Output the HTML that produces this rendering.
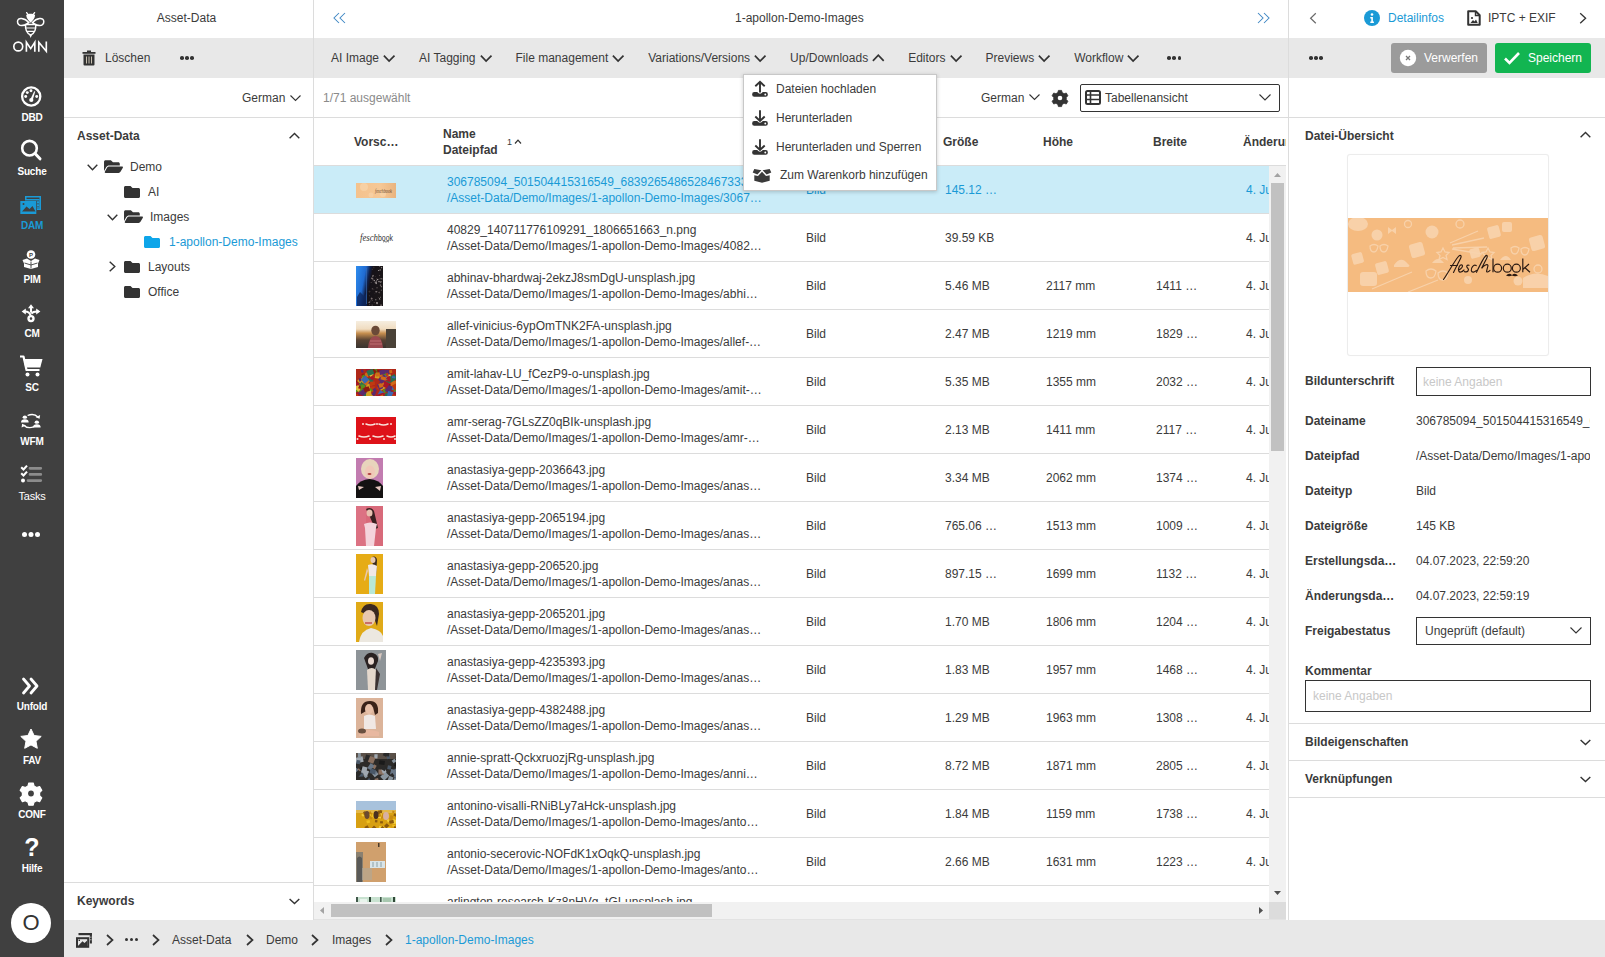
<!DOCTYPE html>
<html><head><meta charset="utf-8">
<style>
*{box-sizing:border-box;margin:0;padding:0}
html,body{width:1605px;height:957px;overflow:hidden;background:#fff}
body{position:relative;font-family:"Liberation Sans",sans-serif;font-size:12px;color:#3b3b3b}
.a{position:absolute}
.t{position:absolute;white-space:nowrap;line-height:16px;height:16px}
.b{font-weight:bold}
.nav{left:0;top:0;width:64px;height:957px;background:#404040}
.nl{position:absolute;left:0;width:64px;text-align:center;color:#fff;font-weight:bold;font-size:10px;line-height:12px;letter-spacing:-0.2px}
.gray{background:#e8e8e8}
.hl{position:absolute;height:1px;background:#dcdcdc}
.vl{position:absolute;width:1px;background:#dcdcdc}
svg{position:absolute;overflow:visible}
.blue{color:#1a9ad6}
.tb{display:flex;white-space:nowrap;line-height:16px}
.tb span{display:flex;align-items:center;margin-right:24px}
.chev{position:relative;margin-left:4px;top:0}
.cd,.cu{display:inline-block;width:12px;height:8px;margin-left:4px;position:relative}
.cd:before,.cu:before{content:"";position:absolute;left:2px;top:-2px;width:6px;height:6px;border-right:2px solid #333;border-bottom:2px solid #333;transform:rotate(45deg)}
.cu:before{top:3px;transform:rotate(-135deg)}
.dots3{display:flex;gap:1.5px;margin-left:0}
.dots3 b{display:block;width:3.6px;height:3.6px;border-radius:50%;background:#333}
</style></head><body>

<!-- NAV -->
<div class="a nav" id="nav">
<!-- bee -->
<svg style="left:0;top:0" width="64" height="60" viewBox="0 0 64 60">
 <g stroke="#fff" stroke-width="1.3" fill="none" stroke-linecap="round"><path d="M26.6 12.6 L28.4 15"/><path d="M34.6 12.6 L32.8 15"/></g>
 <path d="M26.2 15.2 C27.5 13.2 33.8 13.2 35.1 15.2 C35 18.5 32.3 21 30.65 22.8 C29 21 26.3 18.5 26.2 15.2Z" fill="#fff"/>
 <g fill="none" stroke="#fff" stroke-width="1.5">
  <path d="M28.8 22.6 C25 18 17.3 16.5 17.5 21.8 C17.8 27 24.5 26.5 28.8 22.6 Z"/>
  <path d="M32.5 22.6 C36.3 18 44 16.5 43.8 21.8 C43.5 27 36.8 26.5 32.5 22.6 Z"/>
 </g>
 <path d="M25.6 24.6 H35.7 C36.2 30 34 33.5 30.65 35.2 C27.3 33.5 25.1 30 25.6 24.6 Z" fill="#404040" stroke="#fff" stroke-width="1.5"/>
 <path d="M26 28 H35.3 M26.8 31.3 H34.5" stroke="#fff" stroke-width="1.2"/>
 <path d="M29.4 35 H31.9 L30.65 38 Z" fill="#fff"/>
 <g fill="none" stroke="#fff" stroke-width="1.65">
  <circle cx="18.25" cy="46.5" r="4.45"/>
  <path d="M26.4 51.7 V42.2 L30.7 48.6 L34.8 42.2 V51.7" stroke-linejoin="miter"/>
  <path d="M38.8 51.7 V42.2 L46.3 51.2 V41.5"/>
 </g>
</svg>
<!-- DBD gauge -->
<svg style="left:0;top:80px" width="64" height="34" viewBox="0 0 64 34">
 <circle cx="31.2" cy="16.5" r="9.1" fill="none" stroke="#fff" stroke-width="2.3"/>
 <circle cx="25.7" cy="16.5" r="1.45" fill="#fff"/><circle cx="27.3" cy="12.6" r="1.45" fill="#fff"/><circle cx="31" cy="10.8" r="1.45" fill="#fff"/><circle cx="36.7" cy="16.5" r="1.45" fill="#fff"/>
 <path d="M30.2 19.8 L34.2 11.2 L35.2 11.6 L32.6 20.6 Z" fill="#fff"/><circle cx="31.3" cy="20" r="2.1" fill="#fff"/>
</svg>
<div class="nl" style="top:112px">DBD</div>
<!-- Suche -->
<svg style="left:0;top:136px" width="64" height="30" viewBox="0 0 64 30">
 <circle cx="29.5" cy="12.2" r="7.3" fill="none" stroke="#fff" stroke-width="2.6"/>
 <path d="M35 17.5 L40 22.8" stroke="#fff" stroke-width="3" stroke-linecap="round"/>
</svg>
<div class="nl" style="top:166px">Suche</div>
<!-- DAM -->
<svg style="left:0;top:192px" width="64" height="26" viewBox="0 0 64 26">
 <path d="M25 4 h16 v14 h-16 z" fill="#1a9ad6"/>
 <path d="M26.5 5.5 h13 v11 h-13z" fill="#404040"/>
 <path d="M26 7 h13.5 v9.5 h-13.5z" fill="#1a9ad6"/>
 <path d="M38 8 v1.5 M38 11 v1.5 M38 14 v1.5" stroke="#404040" stroke-width="1"/>
 <path d="M20.5 8.5 h16.5 v13.5 h-16.5z" fill="#404040"/>
 <path d="M20.3 9 h16 v13 h-16z" fill="#1a9ad6"/>
 <path d="M22 19.5 l4.5-5 l3 2.5 l3-3 l3 5.5z" fill="#404040"/>
 <circle cx="23.5" cy="12" r="1" fill="#404040"/>
</svg>
<div class="nl blue" style="top:220px;color:#1a9ad6">DAM</div>
<!-- PIM -->
<svg style="left:0;top:246px" width="64" height="26" viewBox="0 0 64 26">
 <circle cx="31" cy="8.5" r="4.3" fill="#fff"/>
 <text x="31" y="10.8" text-anchor="middle" font-size="6" font-weight="bold" fill="#404040" font-family="Liberation Sans">P</text>
 <path d="M22.5 14 L27 12.5 L31 15 L35 12.5 L39.5 14 L38 17.5 L38 21 L31 23 L24 21 L24 17.5 Z" fill="#fff"/>
 <path d="M24.5 17 L31 19 L37.5 17 M31 15.5 v7" stroke="#404040" stroke-width="0.9" fill="none"/>
</svg>
<div class="nl" style="top:274px">PIM</div>
<!-- CM -->
<svg style="left:0;top:300px" width="64" height="26" viewBox="0 0 64 26">
 <path d="M31 4.3 L28 8.3 L34 8.3 Z" fill="#fff"/>
 <path d="M21.6 11.5 L25.8 8.4 L25.8 14.6 Z" fill="#fff"/>
 <path d="M40.4 11.5 L36.2 8.4 L36.2 14.6 Z" fill="#fff"/>
 <g stroke="#fff" stroke-width="2.1" fill="none">
  <path d="M31 7.5 V12.5"/>
  <path d="M25 11.5 Q29.5 11.5 30.6 15.5"/>
  <path d="M37 11.5 Q33 11.5 31.3 13.5"/>
 </g>
 <circle cx="31" cy="18.6" r="2.5" fill="none" stroke="#fff" stroke-width="2.4"/>
</svg>
<div class="nl" style="top:328px">CM</div>
<!-- SC cart -->
<svg style="left:0;top:352px" width="64" height="28" viewBox="0 0 64 28">
 <path d="M20 4.5 h3.5 l3 13.5 h13" fill="none" stroke="#fff" stroke-width="2.2" stroke-linejoin="round"/>
 <path d="M23.5 7 h19 l-2.2 8.5 h-15z" fill="#fff"/>
 <circle cx="27.5" cy="22.5" r="2" fill="#fff"/><circle cx="37.5" cy="22.5" r="2" fill="#fff"/>
</svg>
<div class="nl" style="top:382px">SC</div>
<!-- WFM -->
<svg style="left:0;top:410px" width="64" height="24" viewBox="0 0 64 24"><g transform="translate(-1.86,1.34) scale(1.09,0.83)">
 <circle cx="24.5" cy="7" r="2" fill="#fff"/>
 <path d="M21 13.5 q0-4 3.5-4 q3.5 0 3.5 4z" fill="#fff"/>
 <circle cx="35.5" cy="13" r="2" fill="#fff"/>
 <path d="M32 19.5 q0-4 3.5-4 q3.5 0 3.5 4z" fill="#fff"/>
 <path d="M27 5 q6-3 9.5 2" fill="none" stroke="#fff" stroke-width="1.6"/>
 <path d="M38.5 4.5 l-0.5 4.5 l-3.5-2z" fill="#fff"/>
 <path d="M33 18.5 q-6 3 -9.5 -2" fill="none" stroke="#fff" stroke-width="1.6"/>
 <path d="M21.5 19.5 l0.5-4.5 l3.5 2z" fill="#fff"/>
</g></svg>
<div class="nl" style="top:436px">WFM</div>
<!-- Tasks -->
<svg style="left:0;top:462px" width="64" height="26" viewBox="0 0 64 26">
 <path d="M21.2 5.3 L23.5 7.5 L27 3.6" fill="none" stroke="#fff" stroke-width="2.1"/>
 <path d="M21.2 11.3 L23.5 13.5 L27 9.6" fill="none" stroke="#fff" stroke-width="2.1"/>
 <circle cx="23" cy="18.6" r="2" fill="#fff"/>
 <path d="M30 6.3 h10.8 M30 12.4 h10.8 M28 18.6 h12.8" stroke="#8c8c8c" stroke-width="2.7" stroke-linecap="round"/>
</svg>
<div class="nl" style="top:490px;font-weight:normal;font-size:11px">Tasks</div>
<!-- dots -->
<svg style="left:0;top:528px" width="64" height="12" viewBox="0 0 64 12">
 <circle cx="24.5" cy="6.5" r="2.5" fill="#fff"/><circle cx="31" cy="6.5" r="2.5" fill="#fff"/><circle cx="37.5" cy="6.5" r="2.5" fill="#fff"/>
</svg>
<!-- Unfold -->
<svg style="left:0;top:674px" width="64" height="24" viewBox="0 0 64 24">
 <path d="M23.5 5 l6 7 l-6 7 M31 5 l6 7 l-6 7" fill="none" stroke="#fff" stroke-width="2.8" stroke-linecap="round" stroke-linejoin="round"/>
</svg>
<div class="nl" style="top:701px">Unfold</div>
<!-- FAV -->
<svg style="left:0;top:726px" width="64" height="26" viewBox="0 0 64 26">
 <path d="M31 3 l3.1 6.5 l7.1 0.9 l-5.2 4.9 l1.3 7 l-6.3 -3.4 l-6.3 3.4 l1.3 -7 l-5.2 -4.9 l7.1 -0.9z" fill="#fff" stroke="#fff" stroke-width="1" stroke-linejoin="round"/>
</svg>
<div class="nl" style="top:755px">FAV</div>
<!-- CONF -->
<svg style="left:0;top:780px" width="64" height="28" viewBox="0 0 64 28">
 <g transform="translate(31,13.5)">
  <path d="M-2.2 -10.5 h4.4 l0.8 3 l2.6 1.5 l3 -0.9 l2.2 3.8 l-2.2 2.2 v3 l2.2 2.2 l-2.2 3.8 l-3 -0.9 l-2.6 1.5 l-0.8 3 h-4.4 l-0.8 -3 l-2.6 -1.5 l-3 0.9 l-2.2 -3.8 l2.2 -2.2 v-3 l-2.2 -2.2 l2.2 -3.8 l3 0.9 l2.6 -1.5z" fill="#fff" stroke="#fff" stroke-width="1.2" stroke-linejoin="round"/>
  <circle r="2.9" fill="#404040"/>
 </g>
</svg>
<div class="nl" style="top:809px">CONF</div>
<!-- Hilfe -->
<div class="a" style="left:0;top:833px;width:64px;text-align:center;color:#fff;font-weight:bold;font-size:25px;line-height:28px">?</div>
<div class="nl" style="top:863px">Hilfe</div>
<!-- avatar -->
<div class="a" style="left:11px;top:903px;width:40px;height:40px;border-radius:50%;background:#fff;color:#333;font-size:22px;line-height:40px;text-align:center">O</div>
</div>


<!-- LEFT PANEL -->
<div class="t" style="left:62px;top:10px;width:249px;text-align:center">Asset-Data</div>
<div class="a gray" style="left:64px;top:38px;width:249px;height:40px"></div>
<svg style="left:82px;top:50px" width="14" height="16" viewBox="0 0 14 16"><path d="M0.5 2 h13 v1.8 h-13z" fill="#333"/><path d="M5 0.5 h4 v2 h-4z" fill="#333"/><path d="M1.5 4.5 h11 v10 q0 1 -1 1 h-9 q-1 0 -1-1z" fill="#333"/><path d="M4.5 6.5 v7 M7 6.5 v7 M9.5 6.5 v7" stroke="#c8c0b0" stroke-width="1"/></svg>
<div class="t" style="left:105px;top:50px">Löschen</div>
<div class="a dots3" style="left:180px;top:56px"><b></b><b></b><b></b></div>
<div class="t" style="left:242px;top:90px">German</div>
<svg style="left:290px;top:95px" width="11" height="7" viewBox="0 0 11 7"><path d="M0.5 0.5 L5.5 5.5 L10.5 0.5" fill="none" stroke="#333" stroke-width="1.1"/></svg>
<div class="hl" style="left:64px;top:117px;width:249px"></div>
<div class="t b" style="left:77px;top:128px">Asset-Data</div>
<svg style="left:288px;top:132px" width="12" height="8" viewBox="0 0 12 8"><path d="M1.6 6.3 L6.5 1.5 L11.3 6.3" fill="none" stroke="#333" stroke-width="1.4"/></svg>
<!-- tree -->
<svg style="left:87px;top:164px" width="11" height="7" viewBox="0 0 11 7"><path d="M0.7 0.7 L5.5 5.8 L10.3 0.7" fill="none" stroke="#333" stroke-width="1.4"/></svg>
<svg style="left:104px;top:160px" width="19" height="15" viewBox="0 0 576 456"><path class="fo" d="M572.694 292.093L500.27 416.248A63.997 63.997 0 0 1 444.989 448H45.025c-18.523 0-30.064-20.093-20.731-36.093l72.424-124.155A64 64 0 0 1 152 256h399.964c18.523 0 30.064 20.093 20.73 36.093zM152 224h328v-48c0-26.51-21.49-48-48-48H272l-64-64H48C21.49 64 0 85.49 0 112v278.046l69.077-118.418C86.214 242.25 117.989 224 152 224z" transform="translate(0,-56)" fill="#333"/></svg>
<div class="t" style="left:130px;top:159px">Demo</div>
<svg style="left:124px;top:185px" width="16" height="14" viewBox="0 64 512 384"><path d="M464 128H272l-64-64H48C21.49 64 0 85.49 0 112v288c0 26.51 21.49 48 48 48h416c26.51 0 48-21.49 48-48V176c0-26.51-21.49-48-48-48z" fill="#333"/></svg>
<div class="t" style="left:148px;top:184px">AI</div>
<svg style="left:107px;top:214px" width="11" height="7" viewBox="0 0 11 7"><path d="M0.7 0.7 L5.5 5.8 L10.3 0.7" fill="none" stroke="#333" stroke-width="1.4"/></svg>
<svg style="left:124px;top:210px" width="19" height="15" viewBox="0 0 576 456"><path d="M572.694 292.093L500.27 416.248A63.997 63.997 0 0 1 444.989 448H45.025c-18.523 0-30.064-20.093-20.731-36.093l72.424-124.155A64 64 0 0 1 152 256h399.964c18.523 0 30.064 20.093 20.73 36.093zM152 224h328v-48c0-26.51-21.49-48-48-48H272l-64-64H48C21.49 64 0 85.49 0 112v278.046l69.077-118.418C86.214 242.25 117.989 224 152 224z" transform="translate(0,-56)" fill="#333"/></svg>
<div class="t" style="left:150px;top:209px">Images</div>
<svg style="left:144px;top:235px" width="16" height="14" viewBox="0 64 512 384"><path d="M464 128H272l-64-64H48C21.49 64 0 85.49 0 112v288c0 26.51 21.49 48 48 48h416c26.51 0 48-21.49 48-48V176c0-26.51-21.49-48-48-48z" fill="#0ea5e9"/></svg>
<div class="t blue" style="left:169px;top:234px">1-apollon-Demo-Images</div>
<svg style="left:109px;top:261px" width="7" height="11" viewBox="0 0 7 11"><path d="M0.7 0.7 L5.8 5.5 L0.7 10.3" fill="none" stroke="#333" stroke-width="1.4"/></svg>
<svg style="left:124px;top:260px" width="16" height="14" viewBox="0 64 512 384"><path d="M464 128H272l-64-64H48C21.49 64 0 85.49 0 112v288c0 26.51 21.49 48 48 48h416c26.51 0 48-21.49 48-48V176c0-26.51-21.49-48-48-48z" fill="#333"/></svg>
<div class="t" style="left:148px;top:259px">Layouts</div>
<svg style="left:124px;top:285px" width="16" height="14" viewBox="0 64 512 384"><path d="M464 128H272l-64-64H48C21.49 64 0 85.49 0 112v288c0 26.51 21.49 48 48 48h416c26.51 0 48-21.49 48-48V176c0-26.51-21.49-48-48-48z" fill="#333"/></svg>
<div class="t" style="left:148px;top:284px">Office</div>
<div class="hl" style="left:64px;top:882px;width:249px"></div>
<div class="t b" style="left:77px;top:893px">Keywords</div>
<svg style="left:288px;top:898px" width="12" height="7" viewBox="0 0 12 7"><path d="M1.6 1 L6.5 5.6 L11.3 1" fill="none" stroke="#333" stroke-width="1.4"/></svg>
<div class="vl" style="left:313px;top:0;height:920px"></div>

<!-- BREADCRUMB -->
<div class="a gray" style="left:64px;top:920px;width:1541px;height:37px"></div>
<div class="hl" style="left:314px;top:919px;width:972px;background:#e2e2e2"></div>
<svg style="left:76px;top:932px" width="17" height="16" viewBox="0 0 17 16"><rect x="2.5" y="1" width="13.3" height="2.2" fill="#333"/><rect x="13.8" y="1" width="2.1" height="10.5" fill="#333"/><rect x="14.4" y="4.6" width="0.9" height="1.1" fill="#e8e8e8"/><rect x="14.4" y="7.2" width="0.9" height="1.1" fill="#e8e8e8"/><rect x="1" y="6.2" width="11.2" height="8.6" fill="#e8e8e8" stroke="#333" stroke-width="2"/><path d="M2 13.9 L6.5 9.3 L8.5 11 L11.2 8.6 V13.9z" fill="#333"/><rect x="2.6" y="7.6" width="1.4" height="1.4" fill="#333"/></svg>
<svg class="bc" style="left:106px;top:934px"width="8" height="12" viewBox="0 0 8 12"><path d="M1 1 L6.5 6 L1 11" fill="none" stroke="#333" stroke-width="1.7"/></svg>
<div class="a dots3" style="left:125px;top:938px;gap:2px"><b style="width:3px;height:3px"></b><b style="width:3px;height:3px"></b><b style="width:3px;height:3px"></b></div>
<svg style="left:152px;top:934px" width="8" height="12" viewBox="0 0 8 12"><path d="M1 1 L6.5 6 L1 11" fill="none" stroke="#333" stroke-width="1.7"/></svg>
<div class="t" style="left:172px;top:932px">Asset-Data</div>
<svg style="left:246px;top:934px" width="8" height="12" viewBox="0 0 8 12"><path d="M1 1 L6.5 6 L1 11" fill="none" stroke="#333" stroke-width="1.7"/></svg>
<div class="t" style="left:266px;top:932px">Demo</div>
<svg style="left:311px;top:934px" width="8" height="12" viewBox="0 0 8 12"><path d="M1 1 L6.5 6 L1 11" fill="none" stroke="#333" stroke-width="1.7"/></svg>
<div class="t" style="left:332px;top:932px">Images</div>
<svg style="left:385px;top:934px" width="8" height="12" viewBox="0 0 8 12"><path d="M1 1 L6.5 6 L1 11" fill="none" stroke="#333" stroke-width="1.7"/></svg>
<div class="t blue" style="left:405px;top:932px">1-apollon-Demo-Images</div>

<!-- CENTER -->
<svg style="left:333px;top:12px" width="14" height="12" viewBox="0 0 14 12"><path d="M6 1 L1 6 L6 11 M12 1 L7 6 L12 11" fill="none" stroke="#3f87c4" stroke-width="1.05"/></svg>
<div class="t" style="left:735px;top:10px">1-apollon-Demo-Images</div>
<svg style="left:1256px;top:12px" width="14" height="12" viewBox="0 0 14 12"><path d="M2 1 L7 6 L2 11 M8 1 L13 6 L8 11" fill="none" stroke="#3f87c4" stroke-width="1.05"/></svg>
<div class="a gray" style="left:314px;top:38px;width:974px;height:40px"></div>
<div class="a tb" style="left:331px;top:50px">
 <span>AI Image<svg class="chev" width="12" height="8" viewBox="0 0 12 8"><path d="M0.9 1.7 L6.1 7.1 L11.5 1.7" fill="none" stroke="#333" stroke-width="1.7"/></svg></span><span>AI Tagging<svg class="chev" width="12" height="8" viewBox="0 0 12 8"><path d="M0.9 1.7 L6.1 7.1 L11.5 1.7" fill="none" stroke="#333" stroke-width="1.7"/></svg></span><span>File management<svg class="chev" width="12" height="8" viewBox="0 0 12 8"><path d="M0.9 1.7 L6.1 7.1 L11.5 1.7" fill="none" stroke="#333" stroke-width="1.7"/></svg></span><span>Variations/Versions<svg class="chev" width="12" height="8" viewBox="0 0 12 8"><path d="M0.9 1.7 L6.1 7.1 L11.5 1.7" fill="none" stroke="#333" stroke-width="1.7"/></svg></span><span>Up/Downloads<svg class="chev" width="12" height="8" viewBox="0 0 12 8"><path d="M0.9 6.8 L6.3 1.2 L11.7 6.8" fill="none" stroke="#333" stroke-width="1.7"/></svg></span><span>Editors<svg class="chev" width="12" height="8" viewBox="0 0 12 8"><path d="M0.9 1.7 L6.1 7.1 L11.5 1.7" fill="none" stroke="#333" stroke-width="1.7"/></svg></span><span>Previews<svg class="chev" width="12" height="8" viewBox="0 0 12 8"><path d="M0.9 1.7 L6.1 7.1 L11.5 1.7" fill="none" stroke="#333" stroke-width="1.7"/></svg></span><span>Workflow<svg class="chev" width="12" height="8" viewBox="0 0 12 8"><path d="M0.9 1.7 L6.1 7.1 L11.5 1.7" fill="none" stroke="#333" stroke-width="1.7"/></svg></span><span class="dots3" style="margin-left:4px"><b></b><b></b><b></b></span>
</div>
<div class="t" style="left:323px;top:90px;color:#8a8a8a">1/71 ausgewählt</div>
<div class="t" style="left:981px;top:90px">German</div>
<svg style="left:1029px;top:94px" width="11" height="7" viewBox="0 0 11 7"><path d="M0.5 0.5 L5.5 5.5 L10.5 0.5" fill="none" stroke="#333" stroke-width="1.1"/></svg>
<svg style="left:1052px;top:90px" width="16" height="16" viewBox="-8 -8 16 16" id="gear1">
 <path d="M-1.6 -7.6 h3.2 l0.6 2.2 l1.9 1.1 l2.2 -0.7 l1.6 2.8 l-1.6 1.6 v2.2 l1.6 1.6 l-1.6 2.8 l-2.2 -0.7 l-1.9 1.1 l-0.6 2.2 h-3.2 l-0.6 -2.2 l-1.9 -1.1 l-2.2 0.7 l-1.6 -2.8 l1.6 -1.6 v-2.2 l-1.6 -1.6 l1.6 -2.8 l2.2 0.7 l1.9 -1.1z" fill="#333" stroke="#333" stroke-width="0.8" stroke-linejoin="round"/>
 <circle r="2.3" fill="#fff"/>
</svg>
<div class="a" style="left:1080px;top:84px;width:200px;height:28px;border:1px solid #333;border-radius:2px"></div>
<svg style="left:1085px;top:90px" width="16" height="15" viewBox="0 0 16 15"><rect x="1" y="1" width="14" height="13" rx="1.5" fill="none" stroke="#333" stroke-width="2"/><path d="M1 5 h14 M1 9.5 h14 M5.5 1 v13" stroke="#333" stroke-width="1.6"/></svg>
<div class="t" style="left:1105px;top:90px">Tabellenansicht</div>
<svg style="left:1259px;top:94px" width="12" height="7" viewBox="0 0 12 7"><path d="M0.5 0.5 L6 6 L11.5 0.5" fill="none" stroke="#333" stroke-width="1.1"/></svg>
<div class="hl" style="left:314px;top:117px;width:974px"></div>
<!-- table header -->
<div class="t b" style="left:354px;top:134px">Vorsc…</div>
<div class="t b" style="left:443px;top:126px">Name</div>
<div class="t b" style="left:443px;top:142px">Dateipfad</div>
<div class="t" style="left:507px;top:136px;font-size:9px;line-height:12px">1</div>
<svg style="left:514px;top:139px" width="8" height="5" viewBox="0 0 8 5"><path d="M1 4.5 L4 1.2 L7 4.5" fill="none" stroke="#333" stroke-width="1.2"/></svg>
<div class="t b" style="left:943px;top:134px">Größe</div>
<div class="t b" style="left:1043px;top:134px">Höhe</div>
<div class="t b" style="left:1153px;top:134px">Breite</div>
<div class="a" style="left:1243px;top:126px;width:43px;height:30px;overflow:hidden"><div class="t b" style="left:0;top:8px">Änderungsdatum</div></div>
<div class="hl" style="left:314px;top:165px;width:972px"></div>
<div class="a" style="left:314px;top:166px;width:955px;height:736px;overflow:hidden">
<div class="a row blue" style="left:0;top:0px;width:974px;height:48px;background:#caecf8;border-bottom:1px solid #dcdcdc">
<div class="a" style="left:42px;top:17px;width:40px;height:15px;background:linear-gradient(90deg,#f4c28d,#f6c896 60%,#e9b47f)"><svg style="left:0;top:0" width="40" height="15" viewBox="0 0 40 15"><circle cx="8" cy="4" r="4" fill="#f8d3a8" opacity=".8"/><circle cx="27" cy="11" r="3" fill="#f8d3a8" opacity=".8"/><circle cx="15" cy="12" r="2.5" fill="#f8d3a8" opacity=".7"/><text x="19" y="10" textLength="17" lengthAdjust="spacingAndGlyphs" font-family="Liberation Serif" font-style="italic" font-size="6" fill="#6a4a30">feschbook</text></svg></div>
<div class="t" style="left:133px;top:8px">306785094_501504415316549_6839265486528467333.jpg</div>
<div class="t" style="left:133px;top:24px">/Asset-Data/Demo/Images/1-apollon-Demo-Images/3067…</div>
<div class="t" style="left:492px;top:16px">Bild</div>
<div class="t" style="left:631px;top:16px">145.12 …</div>
<div class="t" style="left:732px;top:16px"></div>
<div class="t" style="left:842px;top:16px"></div>
<div class="t" style="left:932px;top:16px">4. Juli 2023</div>
</div>
<div class="a row" style="left:0;top:48px;width:974px;height:48px;background:#fff;border-bottom:1px solid #dcdcdc">
<div class="a" style="left:42px;top:16px;width:40px;height:14px"><svg style="left:0;top:0" width="40" height="14" viewBox="0 0 40 14"><text x="4" y="10.5" textLength="18" lengthAdjust="spacingAndGlyphs" font-family="Liberation Serif" font-style="italic" font-size="10" fill="#333">fesch</text><text x="22" y="10.5" textLength="15" lengthAdjust="spacingAndGlyphs" font-family="Liberation Sans" font-size="9" fill="#333">book</text><path d="M27 12 q1.5-1 3 0 q1.5-1 3 0" stroke="#555" stroke-width="0.8" fill="none"/></svg></div>
<div class="t" style="left:133px;top:8px">40829_140711776109291_1806651663_n.png</div>
<div class="t" style="left:133px;top:24px">/Asset-Data/Demo/Images/1-apollon-Demo-Images/4082…</div>
<div class="t" style="left:492px;top:16px">Bild</div>
<div class="t" style="left:631px;top:16px">39.59 KB</div>
<div class="t" style="left:732px;top:16px"></div>
<div class="t" style="left:842px;top:16px"></div>
<div class="t" style="left:932px;top:16px">4. Juli 2023</div>
</div>
<div class="a row" style="left:0;top:96px;width:974px;height:48px;background:#fff;border-bottom:1px solid #dcdcdc">
<div class="a" style="left:42px;top:4px;width:27px;height:40px"><svg style="left:0;top:0;overflow:hidden" width="27" height="40" viewBox="0 0 27 40"><defs><linearGradient id="ab1" x1="0" y1="0" x2="1" y2="0.3"><stop offset="0" stop-color="#2f8ef0"/><stop offset=".35" stop-color="#1f6ad0"/><stop offset=".5" stop-color="#10204a"/><stop offset=".6" stop-color="#151218"/><stop offset="1" stop-color="#1a1618"/></linearGradient></defs><rect width="27" height="40" fill="url(#ab1)"/><path d="M1 40 v-9 l3-5 l4 4 l3-3 v13z" fill="#0e2860" opacity=".8"/><rect x="10" y="2" width="1" height="36" fill="#3a70b8" opacity=".6"/><rect x="20.1" y="14.4" width="0.9" height="1.0" fill="#a8a0a0" transform="rotate(8 20.1 14.4)"/><rect x="24.8" y="18.3" width="1.2" height="1.3" fill="#7a7070" transform="rotate(60 24.8 18.3)"/><rect x="20.1" y="15.5" width="1.2" height="1.5" fill="#7a7070" transform="rotate(81 20.1 15.5)"/><rect x="25.0" y="15.2" width="0.8" height="0.5" fill="#5a5050" transform="rotate(20 25.0 15.2)"/><rect x="20.7" y="11.7" width="1.4" height="0.9" fill="#3a3232" transform="rotate(60 20.7 11.7)"/><rect x="25.0" y="15.1" width="1.2" height="1.5" fill="#908888" transform="rotate(50 25.0 15.1)"/><rect x="20.5" y="37.6" width="1.4" height="1.0" fill="#3a3232" transform="rotate(12 20.5 37.6)"/><rect x="19.4" y="10.1" width="0.7" height="0.8" fill="#3a3232" transform="rotate(53 19.4 10.1)"/><rect x="18.0" y="13.7" width="1.2" height="1.2" fill="#a8a0a0" transform="rotate(29 18.0 13.7)"/><rect x="21.9" y="36.2" width="1.5" height="1.9" fill="#a8a0a0" transform="rotate(85 21.9 36.2)"/><rect x="22.1" y="12.7" width="1.3" height="1.4" fill="#a8a0a0" transform="rotate(72 22.1 12.7)"/><rect x="21.5" y="24.7" width="0.8" height="1.1" fill="#3a3232" transform="rotate(36 21.5 24.7)"/><rect x="19.3" y="24.9" width="0.8" height="0.8" fill="#3a3232" transform="rotate(8 19.3 24.9)"/><rect x="15.0" y="11.5" width="1.1" height="1.3" fill="#5a5050" transform="rotate(5 15.0 11.5)"/><rect x="22.9" y="14.7" width="1.2" height="1.3" fill="#a8a0a0" transform="rotate(35 22.9 14.7)"/><rect x="26.0" y="12.1" width="1.2" height="0.8" fill="#a8a0a0" transform="rotate(68 26.0 12.1)"/><rect x="15.6" y="15.9" width="0.7" height="0.8" fill="#7a7070" transform="rotate(88 15.6 15.9)"/><rect x="24.3" y="12.2" width="0.7" height="1.0" fill="#908888" transform="rotate(48 24.3 12.2)"/><rect x="19.8" y="25.1" width="1.1" height="1.2" fill="#a8a0a0" transform="rotate(13 19.8 25.1)"/><rect x="25.2" y="19.8" width="1.3" height="1.2" fill="#7a7070" transform="rotate(38 25.2 19.8)"/><rect x="16.4" y="11.8" width="1.1" height="1.0" fill="#908888" transform="rotate(74 16.4 11.8)"/><rect x="17.9" y="23.0" width="1.0" height="0.7" fill="#3a3232" transform="rotate(59 17.9 23.0)"/><rect x="24.9" y="23.7" width="1.0" height="0.8" fill="#908888" transform="rotate(2 24.9 23.7)"/><rect x="25.4" y="0.8" width="1.2" height="1.1" fill="#908888" transform="rotate(38 25.4 0.8)"/><rect x="17.2" y="14.2" width="1.2" height="1.0" fill="#3a3232" transform="rotate(76 17.2 14.2)"/><rect x="23.2" y="4.1" width="0.9" height="1.2" fill="#a8a0a0" transform="rotate(87 23.2 4.1)"/><rect x="17.0" y="8.7" width="1.4" height="1.7" fill="#7a7070" transform="rotate(41 17.0 8.7)"/><rect x="18.7" y="27.2" width="0.9" height="0.6" fill="#3a3232" transform="rotate(42 18.7 27.2)"/><rect x="15.9" y="31.6" width="1.3" height="1.8" fill="#5a5050" transform="rotate(43 15.9 31.6)"/><rect x="15.8" y="22.2" width="1.4" height="1.1" fill="#5a5050" transform="rotate(4 15.8 22.2)"/><rect x="15.5" y="31.5" width="1.2" height="1.5" fill="#7a7070" transform="rotate(35 15.5 31.5)"/><rect x="23.8" y="3.3" width="1.0" height="1.1" fill="#a8a0a0" transform="rotate(16 23.8 3.3)"/><rect x="19.7" y="33.1" width="1.1" height="1.0" fill="#908888" transform="rotate(37 19.7 33.1)"/><rect x="18.3" y="35.9" width="1.1" height="0.8" fill="#5a5050" transform="rotate(61 18.3 35.9)"/><rect x="24.4" y="38.5" width="1.5" height="1.5" fill="#7a7070" transform="rotate(4 24.4 38.5)"/><rect x="23.9" y="25.9" width="1.4" height="1.4" fill="#3a3232" transform="rotate(69 23.9 25.9)"/><rect x="16.0" y="2.7" width="1.0" height="1.1" fill="#3a3232" transform="rotate(15 16.0 2.7)"/><rect x="13.6" y="35.2" width="1.4" height="1.7" fill="#7a7070" transform="rotate(55 13.6 35.2)"/><rect x="13.2" y="29.1" width="1.2" height="0.9" fill="#3a3232" transform="rotate(30 13.2 29.1)"/><rect x="19.8" y="16.1" width="1.3" height="1.8" fill="#a8a0a0" transform="rotate(14 19.8 16.1)"/><rect x="16.3" y="33.6" width="1.0" height="1.0" fill="#5a5050" transform="rotate(45 16.3 33.6)"/><rect x="14.6" y="34.6" width="0.9" height="0.6" fill="#7a7070" transform="rotate(35 14.6 34.6)"/><rect x="23.5" y="32.1" width="1.5" height="0.9" fill="#a8a0a0" transform="rotate(51 23.5 32.1)"/><rect x="16.5" y="10.5" width="0.7" height="0.8" fill="#908888" transform="rotate(6 16.5 10.5)"/><rect x="23.1" y="0.1" width="1.1" height="0.7" fill="#7a7070" transform="rotate(5 23.1 0.1)"/><rect x="13.9" y="38.0" width="0.8" height="1.0" fill="#5a5050" transform="rotate(65 13.9 38.0)"/><rect x="17.1" y="12.3" width="1.2" height="1.0" fill="#908888" transform="rotate(75 17.1 12.3)"/><rect x="16.4" y="38.5" width="1.0" height="0.9" fill="#7a7070" transform="rotate(71 16.4 38.5)"/><rect x="22.4" y="31.0" width="0.7" height="0.7" fill="#5a5050" transform="rotate(47 22.4 31.0)"/><rect x="21.5" y="21.1" width="1.1" height="1.2" fill="#5a5050" transform="rotate(79 21.5 21.1)"/><rect x="13.7" y="24.5" width="1.5" height="1.8" fill="#3a3232" transform="rotate(53 13.7 24.5)"/><rect x="18.4" y="0.7" width="1.6" height="1.2" fill="#3a3232" transform="rotate(88 18.4 0.7)"/><rect x="23.4" y="8.8" width="1.2" height="0.9" fill="#5a5050" transform="rotate(41 23.4 8.8)"/><rect x="24.7" y="30.8" width="1.0" height="0.8" fill="#908888" transform="rotate(88 24.7 30.8)"/><rect x="23.6" y="25.8" width="0.8" height="1.1" fill="#908888" transform="rotate(85 23.6 25.8)"/></svg></div>
<div class="t" style="left:133px;top:8px">abhinav-bhardwaj-2ekzJ8smDgU-unsplash.jpg</div>
<div class="t" style="left:133px;top:24px">/Asset-Data/Demo/Images/1-apollon-Demo-Images/abhi…</div>
<div class="t" style="left:492px;top:16px">Bild</div>
<div class="t" style="left:631px;top:16px">5.46 MB</div>
<div class="t" style="left:732px;top:16px">2117 mm</div>
<div class="t" style="left:842px;top:16px">1411 …</div>
<div class="t" style="left:932px;top:16px">4. Juli 2023</div>
</div>
<div class="a row" style="left:0;top:144px;width:974px;height:48px;background:#fff;border-bottom:1px solid #dcdcdc">
<div class="a" style="left:42px;top:11px;width:40px;height:27px"><svg style="left:0;top:0;overflow:hidden" width="40" height="27" viewBox="0 0 40 27"><defs><linearGradient id="al1" x1="0" y1="0" x2="0" y2="1"><stop offset="0" stop-color="#f6eee0"/><stop offset=".3" stop-color="#f0dcc0"/><stop offset=".45" stop-color="#c89050"/><stop offset=".7" stop-color="#5a4434"/><stop offset="1" stop-color="#3a3430"/></linearGradient></defs><rect width="40" height="27" fill="url(#al1)"/><rect x="30" y="8" width="10" height="19" fill="#4a4238"/><ellipse cx="19.5" cy="9.5" rx="4.2" ry="4.8" fill="#6a4a38"/><path d="M12 27 q1-12 7.5-12 q6.5 0 7.5 12z" fill="#9a4a50"/><path d="M14 20 h11 M14 23 h12" stroke="#c87878" stroke-width=".8"/></svg></div>
<div class="t" style="left:133px;top:8px">allef-vinicius-6ypOmTNK2FA-unsplash.jpg</div>
<div class="t" style="left:133px;top:24px">/Asset-Data/Demo/Images/1-apollon-Demo-Images/allef-…</div>
<div class="t" style="left:492px;top:16px">Bild</div>
<div class="t" style="left:631px;top:16px">2.47 MB</div>
<div class="t" style="left:732px;top:16px">1219 mm</div>
<div class="t" style="left:842px;top:16px">1829 …</div>
<div class="t" style="left:932px;top:16px">4. Juli 2023</div>
</div>
<div class="a row" style="left:0;top:192px;width:974px;height:48px;background:#fff;border-bottom:1px solid #dcdcdc">
<div class="a" style="left:42px;top:11px;width:40px;height:27px"><svg style="left:0;top:0;overflow:hidden" width="40" height="27" viewBox="0 0 40 27"><rect width="40" height="27" fill="#b02818"/><rect x="5.2" y="17.2" width="4.0" height="2.6" fill="#d06a18" transform="rotate(12 5.2 17.2)"/><rect x="1.4" y="13.2" width="4.1" height="2.6" fill="#2a7050" transform="rotate(53 1.4 13.2)"/><rect x="2.7" y="10.9" width="3.2" height="4.0" fill="#c03a10" transform="rotate(28 2.7 10.9)"/><rect x="22.9" y="0.7" width="4.9" height="5.2" fill="#d0a020" transform="rotate(28 22.9 0.7)"/><rect x="34.2" y="7.1" width="3.1" height="2.2" fill="#c03a10" transform="rotate(73 34.2 7.1)"/><rect x="32.5" y="4.1" width="3.9" height="4.2" fill="#3a68b0" transform="rotate(47 32.5 4.1)"/><rect x="28.2" y="14.8" width="3.3" height="3.6" fill="#5a2a70" transform="rotate(87 28.2 14.8)"/><rect x="30.9" y="12.0" width="4.6" height="6.2" fill="#e0c040" transform="rotate(38 30.9 12.0)"/><rect x="6.4" y="20.8" width="3.7" height="2.5" fill="#a81828" transform="rotate(67 6.4 20.8)"/><rect x="13.1" y="11.6" width="4.5" height="4.9" fill="#c03a10" transform="rotate(15 13.1 11.6)"/><rect x="5.8" y="8.6" width="4.5" height="6.1" fill="#2a7050" transform="rotate(5 5.8 8.6)"/><rect x="2.2" y="14.6" width="5.9" height="7.2" fill="#e0c040" transform="rotate(43 2.2 14.6)"/><rect x="23.4" y="15.2" width="5.1" height="4.9" fill="#c03a10" transform="rotate(34 23.4 15.2)"/><rect x="26.2" y="0.7" width="4.4" height="5.1" fill="#8a1a10" transform="rotate(87 26.2 0.7)"/><rect x="10.7" y="9.8" width="5.5" height="6.2" fill="#d0a020" transform="rotate(59 10.7 9.8)"/><rect x="24.0" y="12.8" width="4.1" height="3.1" fill="#a81828" transform="rotate(16 24.0 12.8)"/><rect x="15.3" y="24.7" width="5.2" height="5.2" fill="#58901a" transform="rotate(57 15.3 24.7)"/><rect x="10.4" y="2.8" width="4.2" height="4.0" fill="#d06a18" transform="rotate(35 10.4 2.8)"/><rect x="39.4" y="18.1" width="5.1" height="4.6" fill="#3a68b0" transform="rotate(19 39.4 18.1)"/><rect x="5.2" y="17.4" width="3.2" height="2.0" fill="#8a1a10" transform="rotate(23 5.2 17.4)"/><rect x="-0.8" y="10.7" width="3.8" height="3.4" fill="#8a1a10" transform="rotate(40 -0.8 10.7)"/><rect x="27.3" y="13.4" width="5.9" height="6.4" fill="#d0a020" transform="rotate(58 27.3 13.4)"/><rect x="31.0" y="23.5" width="5.7" height="7.1" fill="#2a7050" transform="rotate(50 31.0 23.5)"/><rect x="3.2" y="16.8" width="4.2" height="2.7" fill="#c03a10" transform="rotate(26 3.2 16.8)"/><rect x="3.5" y="15.8" width="4.3" height="2.9" fill="#8a1a10" transform="rotate(19 3.5 15.8)"/><rect x="37.9" y="16.2" width="4.6" height="3.0" fill="#3a68b0" transform="rotate(78 37.9 16.2)"/><rect x="25.0" y="25.8" width="4.1" height="4.5" fill="#5a2a70" transform="rotate(15 25.0 25.8)"/><rect x="19.0" y="26.4" width="3.3" height="3.3" fill="#a81828" transform="rotate(10 19.0 26.4)"/><rect x="29.7" y="19.7" width="3.4" height="3.4" fill="#58901a" transform="rotate(66 29.7 19.7)"/><rect x="38.0" y="13.8" width="3.1" height="2.2" fill="#d06a18" transform="rotate(3 38.0 13.8)"/><rect x="11.2" y="17.0" width="5.3" height="3.5" fill="#a81828" transform="rotate(66 11.2 17.0)"/><rect x="5.8" y="20.6" width="4.1" height="4.2" fill="#d06a18" transform="rotate(42 5.8 20.6)"/><rect x="24.1" y="21.1" width="4.9" height="5.9" fill="#3a68b0" transform="rotate(30 24.1 21.1)"/><rect x="29.3" y="5.3" width="5.5" height="5.5" fill="#e0c040" transform="rotate(3 29.3 5.3)"/><rect x="31.4" y="12.2" width="6.0" height="4.5" fill="#8a1a10" transform="rotate(44 31.4 12.2)"/><rect x="37.4" y="26.7" width="4.3" height="5.9" fill="#e0c040" transform="rotate(10 37.4 26.7)"/><rect x="8.3" y="4.5" width="3.7" height="2.8" fill="#8a1a10" transform="rotate(78 8.3 4.5)"/><rect x="18.7" y="17.3" width="5.5" height="6.8" fill="#c03a10" transform="rotate(84 18.7 17.3)"/><rect x="14.9" y="18.9" width="3.4" height="2.6" fill="#58901a" transform="rotate(55 14.9 18.9)"/><rect x="12.6" y="21.4" width="5.4" height="7.4" fill="#2a7050" transform="rotate(59 12.6 21.4)"/><rect x="37.8" y="19.3" width="4.2" height="3.1" fill="#58901a" transform="rotate(3 37.8 19.3)"/><rect x="36.1" y="21.6" width="3.5" height="2.5" fill="#8a1a10" transform="rotate(60 36.1 21.6)"/><rect x="13.4" y="14.4" width="5.0" height="3.5" fill="#d0a020" transform="rotate(83 13.4 14.4)"/><rect x="29.7" y="2.9" width="3.3" height="4.6" fill="#3a68b0" transform="rotate(27 29.7 2.9)"/><rect x="7.7" y="13.0" width="3.1" height="3.7" fill="#e0c040" transform="rotate(33 7.7 13.0)"/><rect x="33.2" y="0.7" width="4.6" height="5.5" fill="#5a2a70" transform="rotate(84 33.2 0.7)"/><rect x="36.1" y="10.8" width="4.8" height="6.3" fill="#d06a18" transform="rotate(16 36.1 10.8)"/><rect x="20.5" y="-0.5" width="4.6" height="4.4" fill="#58901a" transform="rotate(77 20.5 -0.5)"/><rect x="31.8" y="3.8" width="3.0" height="2.9" fill="#c03a10" transform="rotate(71 31.8 3.8)"/><rect x="27.0" y="13.9" width="3.2" height="3.1" fill="#c03a10" transform="rotate(71 27.0 13.9)"/><rect x="6.8" y="0.2" width="3.2" height="2.2" fill="#5a2a70" transform="rotate(71 6.8 0.2)"/><rect x="35.7" y="0.8" width="3.1" height="2.7" fill="#d06a18" transform="rotate(77 35.7 0.8)"/><rect x="27.4" y="11.7" width="4.5" height="4.7" fill="#5a2a70" transform="rotate(64 27.4 11.7)"/><rect x="27.7" y="23.5" width="5.8" height="7.9" fill="#a81828" transform="rotate(71 27.7 23.5)"/><rect x="7.3" y="11.5" width="5.7" height="5.3" fill="#2a7050" transform="rotate(56 7.3 11.5)"/><rect x="26.5" y="11.0" width="3.9" height="3.0" fill="#a81828" transform="rotate(15 26.5 11.0)"/><rect x="5.3" y="19.1" width="5.7" height="6.4" fill="#58901a" transform="rotate(32 5.3 19.1)"/><rect x="38.7" y="5.1" width="5.6" height="7.7" fill="#2a7050" transform="rotate(62 38.7 5.1)"/><rect x="26.4" y="5.3" width="3.5" height="4.1" fill="#d06a18" transform="rotate(51 26.4 5.3)"/><rect x="7.0" y="7.9" width="4.0" height="4.7" fill="#d0a020" transform="rotate(43 7.0 7.9)"/><rect x="17.1" y="-0.5" width="4.7" height="4.0" fill="#8a1a10" transform="rotate(37 17.1 -0.5)"/><rect x="1.6" y="26.6" width="4.5" height="5.6" fill="#c03a10" transform="rotate(10 1.6 26.6)"/><rect x="0.6" y="20.8" width="3.8" height="3.1" fill="#58901a" transform="rotate(54 0.6 20.8)"/><rect x="26.7" y="25.5" width="5.5" height="5.1" fill="#d06a18" transform="rotate(65 26.7 25.5)"/><rect x="27.7" y="1.5" width="4.7" height="3.0" fill="#58901a" transform="rotate(54 27.7 1.5)"/><rect x="10.0" y="-0.5" width="5.7" height="3.8" fill="#a81828" transform="rotate(10 10.0 -0.5)"/><rect x="8.1" y="6.4" width="4.8" height="3.4" fill="#d0a020" transform="rotate(43 8.1 6.4)"/><rect x="16.1" y="24.6" width="6.0" height="6.6" fill="#d0a020" transform="rotate(67 16.1 24.6)"/><rect x="37.5" y="26.1" width="5.1" height="4.2" fill="#58901a" transform="rotate(25 37.5 26.1)"/><rect x="24.8" y="13.9" width="5.8" height="4.4" fill="#5a2a70" transform="rotate(64 24.8 13.9)"/><rect x="10.1" y="21.5" width="5.0" height="7.0" fill="#d0a020" transform="rotate(1 10.1 21.5)"/><rect x="19.7" y="26.4" width="3.1" height="3.1" fill="#3a68b0" transform="rotate(57 19.7 26.4)"/><rect x="32.6" y="11.1" width="3.3" height="3.3" fill="#2a7050" transform="rotate(64 32.6 11.1)"/><rect x="7.8" y="5.4" width="3.9" height="3.0" fill="#58901a" transform="rotate(51 7.8 5.4)"/><rect x="39.3" y="22.4" width="6.0" height="3.6" fill="#a81828" transform="rotate(55 39.3 22.4)"/><rect x="2.5" y="22.6" width="3.5" height="4.5" fill="#a81828" transform="rotate(76 2.5 22.6)"/><rect x="11.0" y="11.9" width="3.7" height="2.7" fill="#5a2a70" transform="rotate(0 11.0 11.9)"/><rect x="38.4" y="26.2" width="3.8" height="3.9" fill="#3a68b0" transform="rotate(4 38.4 26.2)"/><rect x="11.7" y="9.0" width="5.9" height="3.5" fill="#2a7050" transform="rotate(10 11.7 9.0)"/><rect x="19.6" y="4.6" width="4.4" height="4.4" fill="#d0a020" transform="rotate(11 19.6 4.6)"/><rect x="2.7" y="10.2" width="3.8" height="2.4" fill="#d0a020" transform="rotate(38 2.7 10.2)"/><rect x="8.5" y="15.4" width="3.9" height="4.0" fill="#58901a" transform="rotate(84 8.5 15.4)"/><rect x="31.1" y="15.7" width="5.7" height="6.9" fill="#5a2a70" transform="rotate(19 31.1 15.7)"/><rect x="24.4" y="3.1" width="3.9" height="4.9" fill="#d06a18" transform="rotate(80 24.4 3.1)"/><rect x="27.7" y="13.2" width="4.3" height="5.7" fill="#d06a18" transform="rotate(72 27.7 13.2)"/><rect x="32.0" y="22.1" width="5.5" height="5.9" fill="#3a68b0" transform="rotate(10 32.0 22.1)"/><rect x="4.5" y="9.1" width="3.1" height="2.1" fill="#5a2a70" transform="rotate(71 4.5 9.1)"/><rect x="-0.2" y="13.9" width="3.2" height="2.5" fill="#a81828" transform="rotate(0 -0.2 13.9)"/><rect x="1.9" y="25.1" width="4.4" height="5.8" fill="#c03a10" transform="rotate(84 1.9 25.1)"/><rect x="29.6" y="12.3" width="4.6" height="5.7" fill="#a81828" transform="rotate(30 29.6 12.3)"/><rect x="7.4" y="19.7" width="5.2" height="7.2" fill="#5a2a70" transform="rotate(48 7.4 19.7)"/><rect x="36.3" y="7.0" width="3.2" height="2.1" fill="#3a68b0" transform="rotate(9 36.3 7.0)"/><rect x="12.6" y="17.2" width="4.8" height="5.5" fill="#8a1a10" transform="rotate(72 12.6 17.2)"/><rect x="18.8" y="12.6" width="3.4" height="4.7" fill="#c03a10" transform="rotate(88 18.8 12.6)"/><rect x="19.1" y="18.8" width="3.7" height="3.0" fill="#5a2a70" transform="rotate(59 19.1 18.8)"/><rect x="39.7" y="14.4" width="5.3" height="4.5" fill="#c03a10" transform="rotate(60 39.7 14.4)"/><rect x="17.8" y="22.0" width="3.1" height="4.2" fill="#5a2a70" transform="rotate(34 17.8 22.0)"/><rect x="36.6" y="25.1" width="4.2" height="2.7" fill="#c03a10" transform="rotate(18 36.6 25.1)"/><rect x="9.7" y="9.1" width="5.2" height="5.7" fill="#d06a18" transform="rotate(35 9.7 9.1)"/><rect x="27.8" y="5.5" width="5.7" height="7.5" fill="#5a2a70" transform="rotate(50 27.8 5.5)"/><rect x="-0.9" y="12.8" width="3.1" height="3.0" fill="#a81828" transform="rotate(18 -0.9 12.8)"/><rect x="14.4" y="2.4" width="4.2" height="3.7" fill="#e0c040" transform="rotate(43 14.4 2.4)"/><rect x="3.9" y="24.9" width="5.5" height="6.5" fill="#a81828" transform="rotate(32 3.9 24.9)"/><rect x="15.1" y="27.0" width="4.1" height="4.4" fill="#e0c040" transform="rotate(54 15.1 27.0)"/><rect x="34.0" y="6.9" width="5.3" height="3.4" fill="#a81828" transform="rotate(81 34.0 6.9)"/><rect x="9.2" y="6.4" width="5.8" height="5.9" fill="#3a68b0" transform="rotate(47 9.2 6.4)"/><rect x="16.5" y="-0.2" width="5.4" height="6.5" fill="#2a7050" transform="rotate(70 16.5 -0.2)"/><rect x="28.5" y="0.4" width="4.6" height="5.5" fill="#5a2a70" transform="rotate(78 28.5 0.4)"/><rect x="25.4" y="7.0" width="5.3" height="3.4" fill="#d06a18" transform="rotate(16 25.4 7.0)"/><rect x="16.0" y="6.9" width="3.5" height="2.8" fill="#a81828" transform="rotate(51 16.0 6.9)"/></svg></div>
<div class="t" style="left:133px;top:8px">amit-lahav-LU_fCezP9-o-unsplash.jpg</div>
<div class="t" style="left:133px;top:24px">/Asset-Data/Demo/Images/1-apollon-Demo-Images/amit-…</div>
<div class="t" style="left:492px;top:16px">Bild</div>
<div class="t" style="left:631px;top:16px">5.35 MB</div>
<div class="t" style="left:732px;top:16px">1355 mm</div>
<div class="t" style="left:842px;top:16px">2032 …</div>
<div class="t" style="left:932px;top:16px">4. Juli 2023</div>
</div>
<div class="a row" style="left:0;top:240px;width:974px;height:48px;background:#fff;border-bottom:1px solid #dcdcdc">
<div class="a" style="left:42px;top:11px;width:40px;height:27px"><svg style="left:0;top:0;overflow:hidden" width="40" height="27" viewBox="0 0 40 27"><rect width="40" height="27" fill="#d80c14"/><path d="M0 0 h40 v27 h-40z" fill="#e81c20" opacity=".4"/><g fill="none" stroke="#f8e0d8" stroke-width="1.6" stroke-linecap="round"><path d="M10 7 q4.5 2 9 0 M23 7 q4.5 2 9 0 M3 19 q5 2 10 0 M17 19 q5 2 10 0 M31 19 q4 2 8 0"/></g><g fill="#f8e0d8"><circle cx="7" cy="7" r="1"/><circle cx="21" cy="7" r="1"/><circle cx="35" cy="7" r="1"/><circle cx="1.5" cy="22" r="1"/><circle cx="14" cy="22" r="1"/><circle cx="28" cy="22" r="1"/><circle cx="39" cy="22" r="1"/></g></svg></div>
<div class="t" style="left:133px;top:8px">amr-serag-7GLsZZ0qBIk-unsplash.jpg</div>
<div class="t" style="left:133px;top:24px">/Asset-Data/Demo/Images/1-apollon-Demo-Images/amr-…</div>
<div class="t" style="left:492px;top:16px">Bild</div>
<div class="t" style="left:631px;top:16px">2.13 MB</div>
<div class="t" style="left:732px;top:16px">1411 mm</div>
<div class="t" style="left:842px;top:16px">2117 …</div>
<div class="t" style="left:932px;top:16px">4. Juli 2023</div>
</div>
<div class="a row" style="left:0;top:288px;width:974px;height:48px;background:#fff;border-bottom:1px solid #dcdcdc">
<div class="a" style="left:42px;top:4px;width:27px;height:40px"><svg style="left:0;top:0;overflow:hidden" width="27" height="40" viewBox="0 0 27 40"><rect width="27" height="40" fill="#c27cb0"/><ellipse cx="14" cy="11" rx="9" ry="10" fill="#e8d4bc"/><ellipse cx="14" cy="14" rx="5" ry="6.5" fill="#f0c8b8"/><ellipse cx="13.5" cy="16" rx="2" ry="1" fill="#b04040"/><path d="M0 40 v-12 q4-6 13.5-7 q9.5 1 13.5 7 v12z" fill="#141212"/><path d="M2 28 l6 1 l-5 3z M25 28 l-6 1 l5 4z" fill="#e8c8c0"/></svg></div>
<div class="t" style="left:133px;top:8px">anastasiya-gepp-2036643.jpg</div>
<div class="t" style="left:133px;top:24px">/Asset-Data/Demo/Images/1-apollon-Demo-Images/anas…</div>
<div class="t" style="left:492px;top:16px">Bild</div>
<div class="t" style="left:631px;top:16px">3.34 MB</div>
<div class="t" style="left:732px;top:16px">2062 mm</div>
<div class="t" style="left:842px;top:16px">1374 …</div>
<div class="t" style="left:932px;top:16px">4. Juli 2023</div>
</div>
<div class="a row" style="left:0;top:336px;width:974px;height:48px;background:#fff;border-bottom:1px solid #dcdcdc">
<div class="a" style="left:42px;top:4px;width:27px;height:40px"><svg style="left:0;top:0;overflow:hidden" width="27" height="40" viewBox="0 0 27 40"><rect width="27" height="40" fill="#d86a7a"/><rect x="0" width="10" height="40" fill="#e07888" opacity=".6"/><path d="M10 3 q5-3 8 2 l4 17 l-3 1 l-5-12z" fill="#3a2020"/><ellipse cx="13.5" cy="7" rx="3" ry="3.6" fill="#e8c0b0"/><path d="M8 18 q6-3 13 0 l-1 4 l-2 18 h-8 l-1-18z" fill="#f4d4dc"/></svg></div>
<div class="t" style="left:133px;top:8px">anastasiya-gepp-2065194.jpg</div>
<div class="t" style="left:133px;top:24px">/Asset-Data/Demo/Images/1-apollon-Demo-Images/anas…</div>
<div class="t" style="left:492px;top:16px">Bild</div>
<div class="t" style="left:631px;top:16px">765.06 …</div>
<div class="t" style="left:732px;top:16px">1513 mm</div>
<div class="t" style="left:842px;top:16px">1009 …</div>
<div class="t" style="left:932px;top:16px">4. Juli 2023</div>
</div>
<div class="a row" style="left:0;top:384px;width:974px;height:48px;background:#fff;border-bottom:1px solid #dcdcdc">
<div class="a" style="left:42px;top:4px;width:27px;height:40px"><svg style="left:0;top:0;overflow:hidden" width="27" height="40" viewBox="0 0 27 40"><rect width="27" height="40" fill="#e6ac16"/><path d="M16 3 q4-2 5 3 l-1 16 l-2 1z" fill="#3a2a20"/><ellipse cx="17" cy="6" rx="2.5" ry="3" fill="#e8c8b0"/><path d="M12 11 q5-2 9 1 l-1 10 h-7z" fill="#f0e8e8"/><path d="M13 22 h7 l-1 18 h-6z" fill="#b8e8d8"/><path d="M11 14 l-3 12 l1 1 l3-10z" fill="#e8c8b0"/></svg></div>
<div class="t" style="left:133px;top:8px">anastasiya-gepp-206520.jpg</div>
<div class="t" style="left:133px;top:24px">/Asset-Data/Demo/Images/1-apollon-Demo-Images/anas…</div>
<div class="t" style="left:492px;top:16px">Bild</div>
<div class="t" style="left:631px;top:16px">897.15 …</div>
<div class="t" style="left:732px;top:16px">1699 mm</div>
<div class="t" style="left:842px;top:16px">1132 …</div>
<div class="t" style="left:932px;top:16px">4. Juli 2023</div>
</div>
<div class="a row" style="left:0;top:432px;width:974px;height:48px;background:#fff;border-bottom:1px solid #dcdcdc">
<div class="a" style="left:42px;top:4px;width:27px;height:40px"><svg style="left:0;top:0;overflow:hidden" width="27" height="40" viewBox="0 0 27 40"><rect width="27" height="40" fill="#e0aa18"/><path d="M5 10 q2-9 10-8 q8 1 8 10 l-2 12 l-3-8z" fill="#3a2820"/><ellipse cx="13" cy="16" rx="6.5" ry="8" fill="#e8c8b0"/><path d="M9 21 h7" stroke="#c05050" stroke-width="1.5"/><path d="M3 40 q2-12 12-14 q10 2 12 8 v6z" fill="#ece8e0"/></svg></div>
<div class="t" style="left:133px;top:8px">anastasiya-gepp-2065201.jpg</div>
<div class="t" style="left:133px;top:24px">/Asset-Data/Demo/Images/1-apollon-Demo-Images/anas…</div>
<div class="t" style="left:492px;top:16px">Bild</div>
<div class="t" style="left:631px;top:16px">1.70 MB</div>
<div class="t" style="left:732px;top:16px">1806 mm</div>
<div class="t" style="left:842px;top:16px">1204 …</div>
<div class="t" style="left:932px;top:16px">4. Juli 2023</div>
</div>
<div class="a row" style="left:0;top:480px;width:974px;height:48px;background:#fff;border-bottom:1px solid #dcdcdc">
<div class="a" style="left:42px;top:4px;width:30px;height:40px"><svg style="left:0;top:0;overflow:hidden" width="30" height="40" viewBox="0 0 30 40"><rect width="30" height="40" fill="#8e9498"/><path d="M8 8 q3-6 9-5 q6 2 5 8 l-4 10 l-6-2z" fill="#2a2222"/><ellipse cx="15" cy="11" rx="3" ry="3.8" fill="#e8d8d0"/><path d="M22 4 l4 -1 l-2 8z" fill="#d8c8c0"/><path d="M11 20 q5-4 9 0 l1 20 h-9z" fill="#e4d8cc"/><path d="M20 18 l4 6 l-3 16 h-2z" fill="#3a3232"/></svg></div>
<div class="t" style="left:133px;top:8px">anastasiya-gepp-4235393.jpg</div>
<div class="t" style="left:133px;top:24px">/Asset-Data/Demo/Images/1-apollon-Demo-Images/anas…</div>
<div class="t" style="left:492px;top:16px">Bild</div>
<div class="t" style="left:631px;top:16px">1.83 MB</div>
<div class="t" style="left:732px;top:16px">1957 mm</div>
<div class="t" style="left:842px;top:16px">1468 …</div>
<div class="t" style="left:932px;top:16px">4. Juli 2023</div>
</div>
<div class="a row" style="left:0;top:528px;width:974px;height:48px;background:#fff;border-bottom:1px solid #dcdcdc">
<div class="a" style="left:42px;top:4px;width:27px;height:40px"><svg style="left:0;top:0;overflow:hidden" width="27" height="40" viewBox="0 0 27 40"><rect width="27" height="40" fill="#dcb49a"/><path d="M5 16 q-1-13 9-13 q9 0 8 12 l-3 2 l-2-8z" fill="#3a2218"/><ellipse cx="13" cy="11" rx="4" ry="5" fill="#e8c0a8"/><path d="M8 18 q5-3 11 0 l1 13 h-12z" fill="#f0e8e4"/><path d="M3 34 q10-4 20 0 v4 h-20z" fill="#e8b8a0"/><ellipse cx="6" cy="33" rx="4" ry="2.5" fill="#6a5040"/></svg></div>
<div class="t" style="left:133px;top:8px">anastasiya-gepp-4382488.jpg</div>
<div class="t" style="left:133px;top:24px">/Asset-Data/Demo/Images/1-apollon-Demo-Images/anas…</div>
<div class="t" style="left:492px;top:16px">Bild</div>
<div class="t" style="left:631px;top:16px">1.29 MB</div>
<div class="t" style="left:732px;top:16px">1963 mm</div>
<div class="t" style="left:842px;top:16px">1308 …</div>
<div class="t" style="left:932px;top:16px">4. Juli 2023</div>
</div>
<div class="a row" style="left:0;top:576px;width:974px;height:48px;background:#fff;border-bottom:1px solid #dcdcdc">
<div class="a" style="left:42px;top:11px;width:40px;height:27px"><svg style="left:0;top:0;overflow:hidden" width="40" height="27" viewBox="0 0 40 27"><rect width="40" height="27" fill="#2c2a28"/><rect width="40" height="6" fill="#5a5048"/><rect x="22.0" y="24.9" width="4.4" height="4.2" fill="#8a7060" transform="rotate(75 22.0 24.9)"/><rect x="32.0" y="12.3" width="3.6" height="3.9" fill="#4a5868" transform="rotate(12 32.0 12.3)"/><rect x="4.8" y="14.1" width="4.3" height="5.7" fill="#1a1a1a" transform="rotate(5 4.8 14.1)"/><rect x="15.2" y="11.7" width="4.8" height="5.7" fill="#1a1a1a" transform="rotate(20 15.2 11.7)"/><rect x="33.1" y="0.8" width="4.9" height="3.1" fill="#4a5868" transform="rotate(76 33.1 0.8)"/><rect x="18.0" y="11.3" width="3.1" height="3.9" fill="#8a7060" transform="rotate(29 18.0 11.3)"/><rect x="19.5" y="17.5" width="4.9" height="4.8" fill="#8a96a0" transform="rotate(52 19.5 17.5)"/><rect x="39.8" y="22.5" width="6.0" height="7.0" fill="#8a96a0" transform="rotate(29 39.8 22.5)"/><rect x="0.2" y="14.8" width="4.5" height="3.1" fill="#6a7888" transform="rotate(37 0.2 14.8)"/><rect x="38.3" y="22.7" width="4.2" height="2.5" fill="#4a5868" transform="rotate(6 38.3 22.7)"/><rect x="39.2" y="10.1" width="4.4" height="2.9" fill="#1a1a1a" transform="rotate(25 39.2 10.1)"/><rect x="10.1" y="1.4" width="5.3" height="4.6" fill="#2a2a2a" transform="rotate(15 10.1 1.4)"/><rect x="28.0" y="-0.7" width="3.4" height="3.3" fill="#2a2a2a" transform="rotate(22 28.0 -0.7)"/><rect x="6.7" y="13.2" width="5.0" height="7.0" fill="#a0a8b0" transform="rotate(16 6.7 13.2)"/><rect x="14.7" y="10.1" width="4.3" height="5.9" fill="#6a7888" transform="rotate(34 14.7 10.1)"/><rect x="39.0" y="15.6" width="5.6" height="7.8" fill="#6a7888" transform="rotate(26 39.0 15.6)"/><rect x="39.8" y="15.9" width="3.6" height="3.8" fill="#6a7888" transform="rotate(18 39.8 15.9)"/><rect x="9.6" y="20.6" width="3.6" height="3.1" fill="#8a96a0" transform="rotate(49 9.6 20.6)"/><rect x="2.7" y="15.3" width="3.2" height="2.6" fill="#8a7060" transform="rotate(47 2.7 15.3)"/><rect x="17.6" y="25.9" width="4.1" height="4.1" fill="#8a7060" transform="rotate(17 17.6 25.9)"/><rect x="6.5" y="3.3" width="5.6" height="7.4" fill="#a0a8b0" transform="rotate(78 6.5 3.3)"/><rect x="6.8" y="19.7" width="3.7" height="5.1" fill="#4a5868" transform="rotate(87 6.8 19.7)"/><rect x="35.2" y="15.9" width="5.9" height="5.5" fill="#6a7888" transform="rotate(13 35.2 15.9)"/><rect x="38.5" y="5.7" width="3.1" height="3.6" fill="#8a96a0" transform="rotate(53 38.5 5.7)"/><rect x="23.5" y="7.2" width="5.5" height="4.1" fill="#1a1a1a" transform="rotate(8 23.5 7.2)"/><rect x="18.7" y="17.3" width="3.4" height="3.7" fill="#6a7888" transform="rotate(35 18.7 17.3)"/><rect x="36.5" y="20.0" width="3.6" height="2.4" fill="#2a2a2a" transform="rotate(57 36.5 20.0)"/><rect x="0.9" y="6.9" width="3.7" height="3.8" fill="#4a5868" transform="rotate(11 0.9 6.9)"/><rect x="35.5" y="26.5" width="4.1" height="4.6" fill="#1a1a1a" transform="rotate(66 35.5 26.5)"/><rect x="4.8" y="-0.0" width="4.8" height="2.9" fill="#8a96a0" transform="rotate(89 4.8 -0.0)"/><rect x="0.4" y="15.8" width="3.9" height="2.6" fill="#6a7888" transform="rotate(39 0.4 15.8)"/><rect x="40.0" y="1.1" width="4.0" height="4.1" fill="#1a1a1a" transform="rotate(5 40.0 1.1)"/><rect x="29.2" y="18.7" width="5.7" height="7.0" fill="#8a96a0" transform="rotate(45 29.2 18.7)"/><rect x="18.4" y="1.2" width="3.3" height="4.2" fill="#a0a8b0" transform="rotate(3 18.4 1.2)"/><rect x="22.5" y="16.5" width="5.6" height="5.1" fill="#8a7060" transform="rotate(1 22.5 16.5)"/><rect x="2.3" y="16.9" width="4.8" height="6.7" fill="#2a2a2a" transform="rotate(42 2.3 16.9)"/><rect x="29.1" y="15.3" width="4.2" height="4.0" fill="#a0a8b0" transform="rotate(69 29.1 15.3)"/><rect x="29.8" y="-0.2" width="3.3" height="3.5" fill="#2a2a2a" transform="rotate(2 29.8 -0.2)"/><rect x="27.6" y="12.9" width="3.7" height="4.0" fill="#2a2a2a" transform="rotate(32 27.6 12.9)"/><rect x="14.1" y="3.0" width="5.7" height="6.2" fill="#8a7060" transform="rotate(21 14.1 3.0)"/><rect x="13.0" y="25.0" width="5.3" height="5.3" fill="#4a5868" transform="rotate(41 13.0 25.0)"/><rect x="9.3" y="16.8" width="4.2" height="5.2" fill="#a0a8b0" transform="rotate(25 9.3 16.8)"/><rect x="14.8" y="15.3" width="5.6" height="4.8" fill="#4a5868" transform="rotate(17 14.8 15.3)"/><rect x="33.3" y="22.8" width="4.5" height="5.2" fill="#8a96a0" transform="rotate(21 33.3 22.8)"/><rect x="18.3" y="24.9" width="3.3" height="4.2" fill="#2a2a2a" transform="rotate(80 18.3 24.9)"/></svg></div>
<div class="t" style="left:133px;top:8px">annie-spratt-QckxruozjRg-unsplash.jpg</div>
<div class="t" style="left:133px;top:24px">/Asset-Data/Demo/Images/1-apollon-Demo-Images/anni…</div>
<div class="t" style="left:492px;top:16px">Bild</div>
<div class="t" style="left:631px;top:16px">8.72 MB</div>
<div class="t" style="left:732px;top:16px">1871 mm</div>
<div class="t" style="left:842px;top:16px">2805 …</div>
<div class="t" style="left:932px;top:16px">4. Juli 2023</div>
</div>
<div class="a row" style="left:0;top:624px;width:974px;height:48px;background:#fff;border-bottom:1px solid #dcdcdc">
<div class="a" style="left:42px;top:11px;width:40px;height:27px"><svg style="left:0;top:0;overflow:hidden" width="40" height="27" viewBox="0 0 40 27"><rect width="40" height="27" fill="#d8a012"/><rect width="40" height="9" fill="#a8c2dc"/><path d="M0 9 h40 v3 h-40z" fill="#e8c060" opacity=".7"/><rect x="29.4" y="24.1" width="3.2" height="4.4" fill="#f0c020" transform="rotate(59 29.4 24.1)"/><rect x="9.2" y="10.0" width="3.6" height="2.6" fill="#8a5a10" transform="rotate(60 9.2 10.0)"/><rect x="14.6" y="10.9" width="3.7" height="3.0" fill="#c88a10" transform="rotate(52 14.6 10.9)"/><rect x="36.6" y="23.5" width="2.6" height="1.9" fill="#f0c020" transform="rotate(17 36.6 23.5)"/><rect x="17.2" y="11.5" width="3.2" height="4.5" fill="#f0c020" transform="rotate(26 17.2 11.5)"/><rect x="38.4" y="12.2" width="3.5" height="2.6" fill="#8a5a10" transform="rotate(25 38.4 12.2)"/><rect x="26.8" y="12.9" width="3.1" height="4.2" fill="#c88a10" transform="rotate(49 26.8 12.9)"/><rect x="13.8" y="12.2" width="2.6" height="1.9" fill="#f0c020" transform="rotate(42 13.8 12.2)"/><rect x="23.7" y="9.1" width="2.6" height="3.0" fill="#8a5a10" transform="rotate(8 23.7 9.1)"/><rect x="32.6" y="18.1" width="2.6" height="2.2" fill="#f4d040" transform="rotate(60 32.6 18.1)"/><rect x="1.3" y="27.5" width="3.4" height="2.1" fill="#8a5a10" transform="rotate(51 1.3 27.5)"/><rect x="31.3" y="16.0" width="2.0" height="2.2" fill="#f0c020" transform="rotate(57 31.3 16.0)"/><rect x="6.4" y="27.1" width="2.1" height="1.6" fill="#c88a10" transform="rotate(59 6.4 27.1)"/><rect x="13.5" y="19.0" width="2.7" height="3.3" fill="#f0c020" transform="rotate(75 13.5 19.0)"/><rect x="31.7" y="25.3" width="3.5" height="2.2" fill="#f0c020" transform="rotate(26 31.7 25.3)"/><rect x="24.0" y="26.4" width="2.7" height="2.3" fill="#f0c020" transform="rotate(39 24.0 26.4)"/><rect x="11.6" y="24.2" width="3.4" height="3.7" fill="#8a5a10" transform="rotate(61 11.6 24.2)"/><rect x="1.0" y="27.7" width="2.3" height="2.4" fill="#f4d040" transform="rotate(4 1.0 27.7)"/><rect x="23.4" y="24.7" width="2.5" height="2.4" fill="#f4d040" transform="rotate(18 23.4 24.7)"/><rect x="36.6" y="9.6" width="2.1" height="2.1" fill="#c88a10" transform="rotate(16 36.6 9.6)"/><rect x="22.1" y="11.5" width="4.0" height="5.2" fill="#f4d040" transform="rotate(13 22.1 11.5)"/><rect x="14.3" y="10.1" width="2.3" height="2.2" fill="#c88a10" transform="rotate(58 14.3 10.1)"/><rect x="24.4" y="12.2" width="3.8" height="3.9" fill="#f4d040" transform="rotate(88 24.4 12.2)"/><rect x="18.6" y="14.5" width="3.5" height="3.2" fill="#c88a10" transform="rotate(14 18.6 14.5)"/><rect x="39.5" y="27.2" width="2.8" height="3.0" fill="#f4d040" transform="rotate(43 39.5 27.2)"/><rect x="19.2" y="18.8" width="2.4" height="2.5" fill="#8a5a10" transform="rotate(8 19.2 18.8)"/><rect x="30.8" y="22.2" width="3.6" height="4.0" fill="#8a5a10" transform="rotate(46 30.8 22.2)"/><rect x="26.4" y="24.9" width="3.1" height="2.5" fill="#8a5a10" transform="rotate(43 26.4 24.9)"/><rect x="22.8" y="9.2" width="3.3" height="3.4" fill="#8a5a10" transform="rotate(41 22.8 9.2)"/><rect x="18.0" y="24.5" width="3.3" height="3.7" fill="#8a5a10" transform="rotate(44 18.0 24.5)"/><rect x="13.2" y="26.8" width="2.5" height="2.4" fill="#c88a10" transform="rotate(88 13.2 26.8)"/><rect x="13.9" y="15.4" width="2.9" height="2.1" fill="#c88a10" transform="rotate(25 13.9 15.4)"/><rect x="37.4" y="18.1" width="3.7" height="4.2" fill="#f4d040" transform="rotate(21 37.4 18.1)"/><rect x="37.4" y="18.8" width="3.2" height="4.4" fill="#8a5a10" transform="rotate(79 37.4 18.8)"/><rect x="34.6" y="14.1" width="3.1" height="4.3" fill="#c88a10" transform="rotate(20 34.6 14.1)"/><rect x="24.6" y="12.4" width="3.2" height="3.8" fill="#c88a10" transform="rotate(80 24.6 12.4)"/><rect x="39.4" y="27.6" width="3.4" height="2.5" fill="#c88a10" transform="rotate(14 39.4 27.6)"/><rect x="6.4" y="12.7" width="2.6" height="1.7" fill="#f4d040" transform="rotate(44 6.4 12.7)"/><rect x="24.1" y="20.2" width="2.8" height="2.2" fill="#8a5a10" transform="rotate(0 24.1 20.2)"/><rect x="38.0" y="25.3" width="2.7" height="3.5" fill="#8a5a10" transform="rotate(4 38.0 25.3)"/><ellipse cx="11" cy="14" rx="2.5" ry="4" fill="#6a4a30"/><ellipse cx="20" cy="14" rx="2.5" ry="4" fill="#4a3020"/><ellipse cx="30" cy="15" rx="3" ry="4" fill="#d8b0a0"/></svg></div>
<div class="t" style="left:133px;top:8px">antonino-visalli-RNiBLy7aHck-unsplash.jpg</div>
<div class="t" style="left:133px;top:24px">/Asset-Data/Demo/Images/1-apollon-Demo-Images/anto…</div>
<div class="t" style="left:492px;top:16px">Bild</div>
<div class="t" style="left:631px;top:16px">1.84 MB</div>
<div class="t" style="left:732px;top:16px">1159 mm</div>
<div class="t" style="left:842px;top:16px">1738 …</div>
<div class="t" style="left:932px;top:16px">4. Juli 2023</div>
</div>
<div class="a row" style="left:0;top:672px;width:974px;height:48px;background:#fff;border-bottom:1px solid #dcdcdc">
<div class="a" style="left:42px;top:4px;width:30px;height:40px"><svg style="left:0;top:0;overflow:hidden" width="30" height="40" viewBox="0 0 30 40"><rect width="30" height="40" fill="#d4a470"/><rect width="30" height="40" fill="#c89868" opacity=".3"/><rect x="0" y="10" width="7" height="30" fill="#8a8070"/><path d="M1 16 q2.5-3 5 0 v24 h-5z" fill="#5a5a58"/><rect x="14" y="19" width="15" height="7" fill="#d8e4e8"/><path d="M17 20 v5 M21 20 v5 M25 20 v5" stroke="#7a9098" stroke-width=".8"/><rect x="6" y="26" width="10" height="12" fill="#b0a898" opacity=".6"/><rect x="22" y="1" width="1.5" height="4" fill="#4a3a2a"/></svg></div>
<div class="t" style="left:133px;top:8px">antonio-secerovic-NOFdK1xOqkQ-unsplash.jpg</div>
<div class="t" style="left:133px;top:24px">/Asset-Data/Demo/Images/1-apollon-Demo-Images/anto…</div>
<div class="t" style="left:492px;top:16px">Bild</div>
<div class="t" style="left:631px;top:16px">2.66 MB</div>
<div class="t" style="left:732px;top:16px">1631 mm</div>
<div class="t" style="left:842px;top:16px">1223 …</div>
<div class="t" style="left:932px;top:16px">4. Juli 2023</div>
</div>
<div class="a row" style="left:0;top:720px;width:974px;height:48px;background:#fff;border-bottom:1px solid #dcdcdc">
<div class="a" style="left:42px;top:11px;width:40px;height:27px"><svg style="left:0;top:0;overflow:hidden" width="40" height="27" viewBox="0 0 40 27"><rect width="40" height="27" fill="#c8e2d0"/><rect x="0" width="2" height="27" fill="#40584a"/><rect x="13" width="2" height="27" fill="#304838"/><rect x="24" width="1.6" height="27" fill="#40584a"/><rect x="37" width="2" height="27" fill="#304838"/><rect x="4" y="2" width="7" height="5" fill="#e8f4ec"/><rect x="27" y="1" width="8" height="5" fill="#a8c8b0"/></svg></div>
<div class="t" style="left:133px;top:8px">arlington-research-Kz8nHVg_tGI-unsplash.jpg</div>
<div class="t" style="left:133px;top:24px">/Asset-Data/Demo/Images/1-apollon-Demo-Images/arli…</div>
<div class="t" style="left:492px;top:16px">Bild</div>
<div class="t" style="left:631px;top:16px"></div>
<div class="t" style="left:732px;top:16px"></div>
<div class="t" style="left:842px;top:16px"></div>
<div class="t" style="left:932px;top:16px">4. Juli 2023</div>
</div>
</div>
<!-- v scrollbar -->
<div class="a" style="left:1269px;top:166px;width:17px;height:736px;background:#f1f1f1"></div>
<div class="a" style="left:1271px;top:183px;width:13px;height:268px;background:#c1c1c1"></div>
<svg style="left:1269px;top:166px" width="17" height="17" viewBox="0 0 17 17"><path d="M5 11 L8.5 7 L12 11z" fill="#a3a3a3"/></svg>
<svg style="left:1269px;top:885px" width="17" height="17" viewBox="0 0 17 17"><path d="M5 6 L8.5 10 L12 6z" fill="#505050"/></svg>
<!-- h scrollbar -->
<div class="a" style="left:314px;top:902px;width:955px;height:17px;background:#f1f1f1"></div>
<div class="a" style="left:331px;top:904px;width:381px;height:13px;background:#c1c1c1"></div>
<svg style="left:314px;top:902px" width="17" height="17" viewBox="0 0 17 17"><path d="M10 5 L6 8.5 L10 12z" fill="#a3a3a3"/></svg>
<svg style="left:1252px;top:902px" width="17" height="17" viewBox="0 0 17 17"><path d="M7 5 L11 8.5 L7 12z" fill="#505050"/></svg>
<div class="a" style="left:1269px;top:902px;width:17px;height:17px;background:#dcdcdc"></div>

<!-- RIGHT -->
<div class="vl" style="left:1288px;top:0;height:920px"></div>
<svg style="left:1309px;top:12px" width="9" height="13" viewBox="0 0 9 13"><path d="M6.8 1.2 L1.6 6.2 L6.8 11.2" fill="none" stroke="#6a6a6a" stroke-width="1.2"/></svg>
<svg style="left:1364px;top:10px" width="16" height="16" viewBox="0 0 16 16"><circle cx="8" cy="8" r="8" fill="#1a9ad6"/><circle cx="8" cy="4.5" r="1.3" fill="#fff"/><path d="M6.3 7 h2.6 v4.6 h1 v1.4 h-3.6 v-1.4 h1 v-3.2 h-1z" fill="#fff"/></svg>
<div class="t blue" style="left:1388px;top:10px">Detailinfos</div>
<svg style="left:1467px;top:10px" width="14" height="16" viewBox="0 0 14 16"><path d="M1.2 1.2 h7.5 l4 4 v9.6 h-11.5z" fill="none" stroke="#333" stroke-width="2" stroke-linejoin="round"/><path d="M8.5 1.2 v4.3 h4.2" fill="none" stroke="#333" stroke-width="1.4"/><circle cx="5" cy="8" r="1.1" fill="#333"/><path d="M3.5 13 l2.5-3 l1.5 1.5 l1.5-2 l1.7 3.5z" fill="#333"/></svg>
<div class="t" style="left:1488px;top:10px">IPTC + EXIF</div>
<svg style="left:1578px;top:12px" width="9" height="13" viewBox="0 0 9 13"><path d="M2.2 1.2 L7.6 6.2 L2.2 11.2" fill="none" stroke="#333" stroke-width="1.3"/></svg>
<div class="a gray" style="left:1289px;top:38px;width:316px;height:40px"></div>
<div class="a dots3" style="left:1309px;top:56px"><b></b><b></b><b></b></div>
<div class="a" style="left:1391px;top:43px;width:96px;height:30px;background:#9b9b9b;border-radius:3px"></div>
<svg style="left:1399px;top:50px" width="18" height="17" viewBox="0 0 18 17"><circle cx="9" cy="8" r="8.2" fill="#fff"/><path d="M7 6 L11 10 M11 6 L7 10" stroke="#777" stroke-width="1.3"/></svg>
<div class="t" style="left:1424px;top:50px;color:#fff">Verwerfen</div>
<div class="a" style="left:1495px;top:43px;width:96px;height:30px;background:#12b551;border-radius:3px"></div>
<svg style="left:1503px;top:50px" width="18" height="16" viewBox="0 0 18 16"><path d="M2 8.5 L6.5 13 L16 3" fill="none" stroke="#fff" stroke-width="2.6"/></svg>
<div class="t" style="left:1528px;top:50px;color:#fff">Speichern</div>
<div class="hl" style="left:1289px;top:117px;width:316px"></div>
<div class="t b" style="left:1305px;top:128px">Datei-Übersicht</div>
<svg style="left:1579px;top:131px" width="12" height="8" viewBox="0 0 12 8"><path d="M1.6 6.3 L6.5 1.5 L11.3 6.3" fill="none" stroke="#333" stroke-width="1.4"/></svg>
<!-- preview -->
<div class="a" style="left:1347px;top:154px;width:202px;height:202px;background:#fff;border:1px solid #ececec;border-radius:3px;box-shadow:0 0 1px rgba(0,0,0,.05)"></div>
<div class="a" style="left:1348px;top:218px;width:200px;height:74px;background:#f5bb80;overflow:hidden">
 <svg style="left:0;top:0" width="200" height="74" viewBox="0 0 200 74">
  <g fill="#f9d4ae" opacity="0.9">
   <ellipse cx="10" cy="6" rx="10" ry="7"/><circle cx="29" cy="17" r="5.5"/><path d="M40 9 l4 3 l4-3 v7 l-4-3 l-4 3z"/><circle cx="84" cy="14" r="6.5"/>
   <rect x="62" y="25" width="14" height="14" rx="2.5" transform="rotate(-15 69 32)"/><rect x="4" y="35" width="11" height="11" rx="2" transform="rotate(-15 9 40)"/><rect x="28" y="44" width="12" height="12" rx="2" transform="rotate(-15 34 50)"/>
   <rect x="140" y="8" width="12" height="12" rx="2" transform="rotate(-15 146 14)"/><rect x="154" y="4" width="10" height="10" rx="2"/><rect x="182" y="18" width="14" height="14" rx="2.5" transform="rotate(-15 189 25)"/><rect x="122" y="30" width="10" height="10" rx="2" transform="rotate(-15 127 35)"/>
   <path d="M46 47 q7-10 14-1 q3 2 0 3 h-14z"/><path d="M84 45 q6-8 12 0 h-12z"/><path d="M152 42 q6-8 11 0z"/>
   <rect x="12" y="54" width="17" height="14" rx="3"/><circle cx="120" cy="62" r="4"/><circle cx="170" cy="63" r="4.5"/><path d="M175 60 q12-8 25-2 v12 h-25z"/>
  </g>
  <g fill="none" stroke="#f9d4ae" stroke-width="1.3" opacity="0.9">
   <path d="M102 25 l28-12 M104 27 l32-7 M105 30 l34-1 M104 31 l30 5"/><path d="M24 71 l40-17 M60 74 l30-12"/>
   <path d="M22 28 q4-3 8 0 q-1 6-4 6 q-4 0-4-6z M32 28 q4-3 8 0 q-1 6-4 6 q-4 0-4-6z"/>
   <path d="M78 53 q5-4 10 0 q-1 7-5 7 q-5 0-5-7z M90 55 q5-4 10 0 q-1 7-5 7 q-5 0-5-7z"/>
   <path d="M163 30 q4-3 8 0 q-1 6-4 6 q-4 0-4-6z M173 31 q4-3 8 0 q-1 6-4 6 q-4 0-4-6z"/>
   <circle cx="60" cy="6" r="3.5"/><circle cx="112" cy="6" r="4"/><circle cx="190" cy="51" r="4"/>
   <path d="M95 30 l2 4 l4 0.5 l-3 3 l1 4 l-4-2 l-4 2 l1-4 l-3-3 l4-0.5z"/><path d="M140 30 l2 4 l4 0.5 l-3 3 l1 4 l-4-2 l-4 2 l1-4 l-3-3 l4-0.5z"/>
  </g>
  <g fill="none" stroke="#2b1a12" stroke-width="1.15" stroke-linecap="round">
   <path d="M95.5 61.5 C100 55 106 44 110 39 C112 36.5 114.2 37 112.5 40.5 C110.5 44.5 107.5 50 105.5 54.5 M102.5 47.5 h7"/>
   <path d="M110.5 52 C113.5 51 115.5 48 114 47 C112 46 109.8 50 110.8 53 C111.5 55 114 54 116 52"/>
   <path d="M121 47.3 C119 46.6 117.8 48.5 119.6 50 C121.5 51.6 120 54.8 116.5 53.6"/>
   <path d="M128.2 47.6 C125.5 46 122.8 50 123.3 52.6 C123.8 55 126.8 54.2 128.5 52.4"/>
   <path d="M128.5 54.3 C131.5 48 135.5 40 137.5 38 C139 36.5 140 38 138.6 40.6 L133.6 50.3 C136 47 139.5 45.5 140 47.6 L138.6 53 C138.4 54.6 140.2 54.2 142 52.4"/>
  </g>
  <g fill="none" stroke="#2b1a12" stroke-width="1.2">
   <path d="M145 40.5 V54.3"/><circle cx="149.6" cy="50.2" r="4"/><circle cx="159.3" cy="50.2" r="4"/><circle cx="168.4" cy="50.2" r="4"/>
   <path d="M174.8 40.5 V54.3 M174.8 51.5 L181 46 M177 49.8 L182 54.3"/>
  </g>
  <path d="M158 57.5 q3-3 6 -0.5 q3-2.5 6 0.5 q-3 1.5 -6 0 q-3 1.5 -6 0z" fill="#2b1a12"/>
 </svg>
</div>
<!-- form -->
<div class="t b" style="left:1305px;top:373px">Bildunterschrift</div>
<div class="a" style="left:1416px;top:367px;width:175px;height:29px;border:1px solid #333"></div>
<div class="t" style="left:1423px;top:374px;color:#c8c8c8">keine Angaben</div>
<div class="t b" style="left:1305px;top:413px">Dateiname</div>
<div class="a" style="left:1416px;top:413px;width:174px;height:16px;overflow:hidden"><div class="t" style="left:0;top:0">306785094_501504415316549_6839265486528467333.jpg</div></div>
<div class="t b" style="left:1305px;top:448px">Dateipfad</div>
<div class="a" style="left:1416px;top:448px;width:174px;height:16px;overflow:hidden"><div class="t" style="left:0;top:0">/Asset-Data/Demo/Images/1-apollon-Demo-Images</div></div>
<div class="t b" style="left:1305px;top:483px">Dateityp</div>
<div class="t" style="left:1416px;top:483px">Bild</div>
<div class="t b" style="left:1305px;top:518px">Dateigröße</div>
<div class="t" style="left:1416px;top:518px">145 KB</div>
<div class="t b" style="left:1305px;top:553px">Erstellungsda…</div>
<div class="t" style="left:1416px;top:553px">04.07.2023, 22:59:20</div>
<div class="t b" style="left:1305px;top:588px">Änderungsda…</div>
<div class="t" style="left:1416px;top:588px">04.07.2023, 22:59:19</div>
<div class="t b" style="left:1305px;top:623px">Freigabestatus</div>
<div class="a" style="left:1416px;top:617px;width:175px;height:28px;border:1px solid #333"></div>
<div class="t" style="left:1425px;top:623px">Ungeprüft (default)</div>
<svg style="left:1570px;top:627px" width="12" height="7" viewBox="0 0 12 7"><path d="M0.5 0.5 L6 6 L11.5 0.5" fill="none" stroke="#333" stroke-width="1.1"/></svg>
<div class="t b" style="left:1305px;top:663px">Kommentar</div>
<div class="a" style="left:1305px;top:680px;width:286px;height:32px;border:1px solid #333"></div>
<div class="t" style="left:1313px;top:688px;color:#c8c8c8">keine Angaben</div>
<div class="hl" style="left:1289px;top:723px;width:316px"></div>
<div class="t b" style="left:1305px;top:734px">Bildeigenschaften</div>
<svg style="left:1579px;top:739px" width="12" height="7" viewBox="0 0 12 7"><path d="M1.6 1 L6.5 5.6 L11.3 1" fill="none" stroke="#333" stroke-width="1.4"/></svg>
<div class="hl" style="left:1289px;top:760px;width:316px"></div>
<div class="t b" style="left:1305px;top:771px">Verknüpfungen</div>
<svg style="left:1579px;top:776px" width="12" height="7" viewBox="0 0 12 7"><path d="M1.6 1 L6.5 5.6 L11.3 1" fill="none" stroke="#333" stroke-width="1.4"/></svg>
<div class="hl" style="left:1289px;top:797px;width:316px"></div>

<!-- DROPDOWN -->
<div class="a" style="left:743px;top:74px;width:194px;height:117px;background:#fff;border:1px solid #c8c8c8;box-shadow:0 1px 4px rgba(0,0,0,.2)"></div>
<svg style="left:752px;top:81px" width="17" height="16" viewBox="0 0 17 16"><path d="M3.3 5.3 L8 0.8 L12.7 5.3 M8 1.2 V11.6" fill="none" stroke="#333" stroke-width="1.9"/><path d="M2.3 11.1 H5.2 Q8 14.6 10.8 11.1 H13.7 Q15.9 11.1 15.9 13.45 Q15.9 15.8 13.7 15.8 H2.3 Q0.1 15.8 0.1 13.45 Q0.1 11.1 2.3 11.1Z" fill="#333"/><circle cx="13.3" cy="13.5" r="0.95" fill="#fff"/></svg>
<div class="t" style="left:776px;top:81px">Dateien hochladen</div>
<svg style="left:752px;top:110px" width="17" height="16" viewBox="0 0 17 16"><path d="M8 0.2 V10.6 M3.3 6.5 L8 11 L12.7 6.5" fill="none" stroke="#333" stroke-width="1.9"/><path d="M2.3 11.1 H5.2 Q8 14.6 10.8 11.1 H13.7 Q15.9 11.1 15.9 13.45 Q15.9 15.8 13.7 15.8 H2.3 Q0.1 15.8 0.1 13.45 Q0.1 11.1 2.3 11.1Z" fill="#333"/><circle cx="13.3" cy="13.5" r="0.95" fill="#fff"/></svg>
<div class="t" style="left:776px;top:110px">Herunterladen</div>
<svg style="left:752px;top:139px" width="17" height="16" viewBox="0 0 17 16"><path d="M8 0.2 V10.6 M3.3 6.5 L8 11 L12.7 6.5" fill="none" stroke="#333" stroke-width="1.9"/><path d="M2.3 11.1 H5.2 Q8 14.6 10.8 11.1 H13.7 Q15.9 11.1 15.9 13.45 Q15.9 15.8 13.7 15.8 H2.3 Q0.1 15.8 0.1 13.45 Q0.1 11.1 2.3 11.1Z" fill="#333"/><circle cx="13.3" cy="13.5" r="0.95" fill="#fff"/></svg>
<div class="t" style="left:776px;top:139px">Herunterladen und Sperren</div>
<svg style="left:752px;top:168px" width="20" height="16" viewBox="0 0 20 16"><path d="M0.7 4.4 L2.3 1.1 L9.4 2.3 L5.4 6.6 Z M19.3 4.4 L17.7 1.1 L10.6 2.3 L14.6 6.6 Z" fill="#3a3a3a"/><path d="M2.3 7.3 L6 7.9 L10 3.7 L14 7.9 L17.7 7.3 V12.8 L10 14.7 L2.3 12.8 Z" fill="#3a3a3a"/></svg>
<div class="t" style="left:780px;top:167px">Zum Warenkorb hinzufügen</div>

</body></html>
